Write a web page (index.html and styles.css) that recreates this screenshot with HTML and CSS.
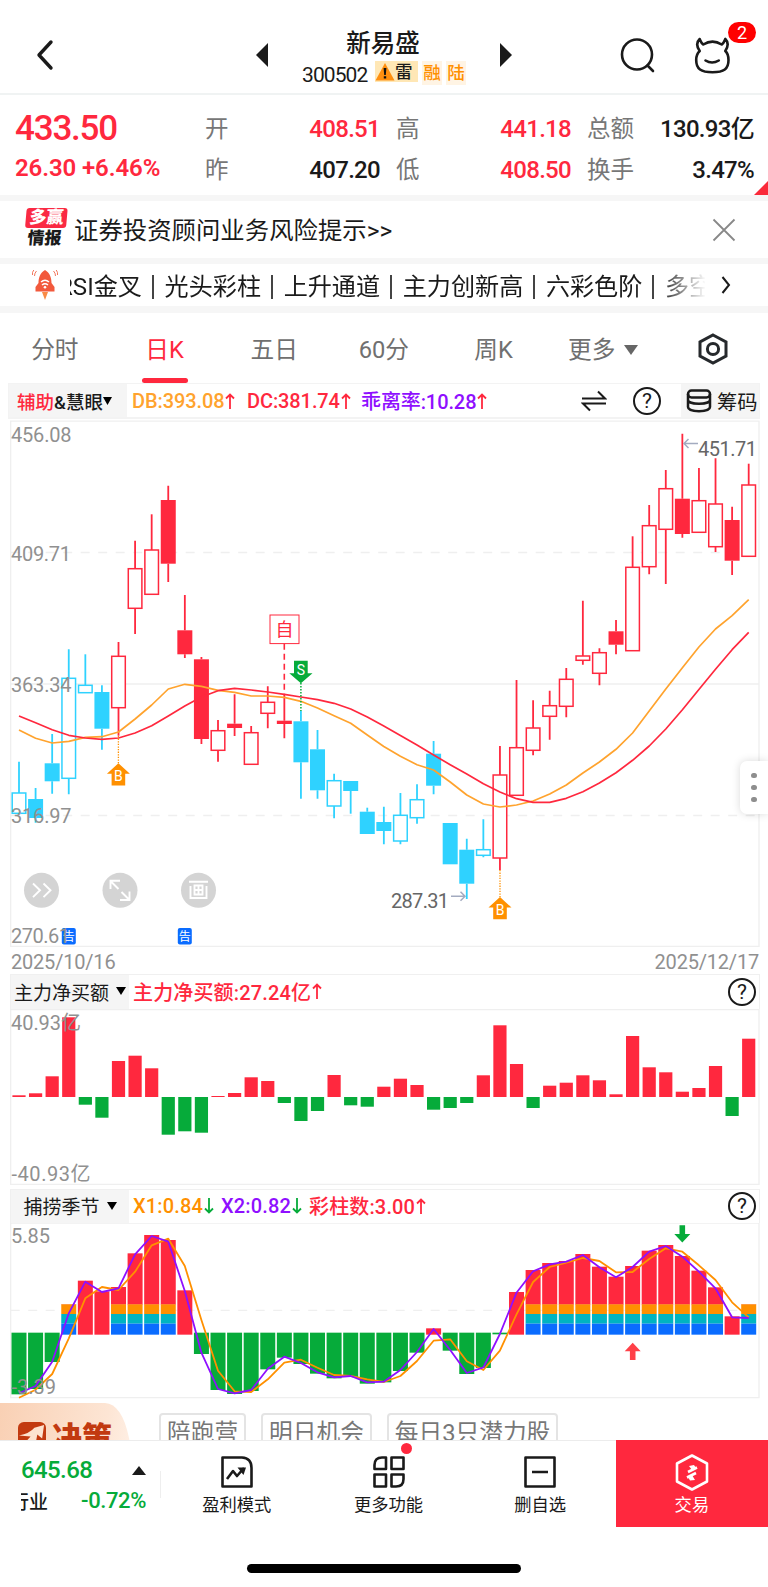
FILE: index.html
```html
<!DOCTYPE html>
<html lang="zh-CN">
<head>
  <meta charset="utf-8">
  <title>新易盛 300502</title>
  <link rel="stylesheet" href="styles.css">
</head>
<body>
  <header class="topbar">
    <svg class="back" width="20" height="32" viewBox="0 0 20 32"><path d="M16 3 L4 16 L16 29"/></svg>
    <svg class="prev" width="12" height="24" viewBox="0 0 12 24"><path d="M12 0 V24 L0 12Z"/></svg>
    <div class="stock">
      <div class="stock-name">新易盛</div>
      <div class="stock-code">
        <span class="code">300502</span>
        <span class="tag tag-warn"><svg width="20" height="19" viewBox="0 0 20 19"><path d="M10 1 L19.5 18.5 H0.5Z" fill="#ff8f0f"/><path d="M8.6 6 h2.8 l-.6 7 h-1.6z M8.8 14.2h2.4v2.3h-2.4z" fill="#111"/></svg>雷</span>
        <span class="tag">融</span>
        <span class="tag">陆</span>
      </div>
    </div>
    <svg class="next" width="12" height="24" viewBox="0 0 12 24"><path d="M0 0 V24 L12 12Z"/></svg>
    <svg class="search" width="36" height="36" viewBox="0 0 36 36"><circle cx="17" cy="16.5" r="15"/><path d="M27.5 27.5 L33 33"/></svg>
    <div class="robot">
      <svg width="38" height="38" viewBox="0 0 38 38"><path d="M6.7 3 C3.6 6 3.2 10 6.7 15 C4.5 17 3.2 20 3.2 24 C3.2 33 8 36.3 19.5 36.3 C31 36.3 35.5 33 35.5 24 C35.5 20 34.500 17 32.3 15 C35.600 10 35.300 6 32.3 3 C31 6 30.8 7.500 28.7 8.500 C23 5 16 5 10.3 8.500 C8.200 7.500 8 6 6.7 3Z"/><path d="M12.5 24.5 Q19 28.500 25.8 24.5"/></svg>
      <span class="badge">2</span>
    </div>
  </header>

  <section class="quote">
    <div class="price">433.50</div>
    <div class="label">开</div><div class="val up">408.51</div>
    <div class="label">高</div><div class="val up">441.18</div>
    <div class="label">总额</div><div class="val">130.93亿</div>
    <div class="change">26.30 +6.46%</div>
    <div class="label">昨</div><div class="val">407.20</div>
    <div class="label">低</div><div class="val up">408.50</div>
    <div class="label">换手</div><div class="val">3.47%</div>
    <i class="corner"></i>
  </section>

  <section class="notice">
    <div class="intel"><span class="intel-top">多赢</span><span class="intel-bottom">情报</span></div>
    <span class="notice-text">证券投资顾问业务风险提示&gt;&gt;</span>
    <svg class="close" width="24" height="24" viewBox="0 0 24 24"><path d="M1.5 1.5 L22.5 22.5 M22.5 1.5 L1.5 22.5"/></svg>
  </section>

  <section class="signals">
    <svg class="rocket" width="26" height="32" viewBox="0 0 26 32">
      <path d="M13 1 C18 4 19.5 9 19.5 14 L22.5 18 V22.500 H3.5 V18 L6.5 14 C6.5 9 8 4 13 1Z" fill="#f2593c"/>
      <path d="M10 23 H16 L13 31Z" fill="#f98a45"/>
      <path d="M9 13 Q13 9.5 17 13 M10 16 Q13 13.5 16 16" fill="none" stroke="#fff" stroke-width="1.5"/><circle cx="13" cy="18.2" r="1.3" fill="#fff"/>
      <path d="M4.5 2 Q2.5 4 2.5 7 M1.8 1 Q0 3 0.5 6 M21.5 2 Q23.5 4 23.5 7 M24.2 1 Q26 3 25.5 6" fill="none" stroke="#f2765c"/>
    </svg>
    <div class="signal-list">
      <span class="first">RSI金叉</span><i></i><span>光头彩柱</span><i></i><span>上升通道</span><i></i><span>主力创新高</span><i></i><span>六彩色阶</span><i></i><span>多空</span>
    </div>
    <svg class="more" width="10" height="18" viewBox="0 0 10 18"><path d="M1.5 1 L8 9 L1.5 17"/></svg>
  </section>

  <nav class="tabs">
    <div class="tab">分时</div>
    <div class="tab active">日K</div>
    <div class="tab">五日</div>
    <div class="tab">60分</div>
    <div class="tab">周K</div>
    <div class="tab tab-more">更多<svg width="14" height="10" viewBox="0 0 14 10"><path d="M0 0 H14 L7 10Z" fill="#666"/></svg></div>
    <div class="tab"><svg width="30" height="32" viewBox="0 0 30 32" fill="none" stroke="#26292c" stroke-width="3"><path d="M15 2 L28 9 V23 L15 30 L2 23 V9Z"/><circle cx="15" cy="16" r="5.6"/></svg></div>
  </nav>

  <div class="toolbar">
    <div class="main-ind"><b class="up">辅助</b><b>&amp;慧眼</b><svg width="9" height="8" viewBox="0 0 9 8"><path d="M0 0H9L4.5 8Z"/></svg></div>
    <span class="ind orange w-db">DB:393.08<svg class="arr" viewBox="0 0 10 16"><path d="M5 16V1.5M1 5.5L5 1.5L9 5.5"/></svg></span>
    <span class="ind up w-dc">DC:381.74<svg class="arr" viewBox="0 0 10 16"><path d="M5 16V1.5M1 5.5L5 1.5L9 5.5"/></svg></span>
    <span class="ind purple">乖离率:10.28<svg class="arr red-arr" viewBox="0 0 10 16"><path d="M5 16V1.5M1 5.5L5 1.5L9 5.5"/></svg></span>
    <svg class="swap" width="26" height="22" viewBox="0 0 26 22"><path d="M1 8.5H24L17 1.5M25 13.5H2L9 20.5"/></svg>
    <span class="help">?</span>
    <div class="chips"><svg width="26" height="24" viewBox="0 0 26 24" fill="none" stroke="#1a1a1a" stroke-width="2.5"><rect x="2" y="1.5" width="22" height="7" rx="3.500"/><path d="M2 5V18C2 23.500 24 23.500 24 18V5M2 11C2 16 24 16 24 11"/></svg>筹码</div>
  </div>

  <div class="kline">
    <svg id="kline" width="750" height="527" viewBox="10 420 750 527"></svg>
    <div class="handle"><i></i><i></i><i></i></div>
  </div>
  <div class="dates"><span>2025/10/16</span><span>2025/12/17</span></div>

  <div class="panel-head">
    <div class="panel-name">主力净买额<svg width="10" height="8" viewBox="0 0 10 8"><path d="M0 0H10L5 8Z"/></svg></div>
    <span class="ind up">主力净买额:27.24亿<svg class="arr" viewBox="0 0 10 16"><path d="M5 16V1.5M1 5.5L5 1.5L9 5.5"/></svg></span>
    <span class="help">?</span>
  </div>
  <svg id="flow" class="panel" width="750" height="176" viewBox="10 1009 750 176"></svg>

  <div class="panel-head head-season">
    <div class="panel-name">捕捞季节<svg width="10" height="8" viewBox="0 0 10 8"><path d="M0 0H10L5 8Z"/></svg></div>
    <span class="ind deep w-x1">X1:0.84<svg class="arr green-arr" viewBox="0 0 10 16"><path d="M5 0V14.5M1 10.5L5 14.5L9 10.5"/></svg></span>
    <span class="ind purple w-x2">X2:0.82<svg class="arr green-arr" viewBox="0 0 10 16"><path d="M5 0V14.5M1 10.5L5 14.5L9 10.5"/></svg></span>
    <span class="ind up">彩柱数:3.00<svg class="arr" viewBox="0 0 10 16"><path d="M5 16V1.5M1 5.5L5 1.5L9 5.5"/></svg></span>
    <span class="help">?</span>
  </div>
  <svg id="season" class="panel" width="750" height="176" viewBox="10 1223 750 176"></svg>

  <div class="promo">
    <div class="decision">
      <svg width="28" height="28" viewBox="0 0 29 29"><rect width="29" height="29" rx="6" fill="#c23a10"/><path d="M1 14 Q12 12 17 6 L27 3 L25 17 L20 13 L17 29 L11 22 L4 25 L13 15Z" fill="#fde3d0"/></svg>
      <span>决策</span>
    </div>
    <div class="chip">陪跑营</div>
    <div class="chip">明日机会</div>
    <div class="chip">每日3只潜力股</div>
  </div>

  <footer class="bottom">
    <div class="index">
      <div class="index-row"><span class="index-val">645.68</span><svg width="14" height="9" viewBox="0 0 14 9"><path d="M0 9H14L7 0Z" fill="#1a1a1a"/></svg></div>
      <div class="index-row"><span class="index-name"><span>行业</span></span><span class="index-pct">-0.72%</span></div>
    </div>
    <div class="nav-item">
      <svg width="32" height="32" viewBox="0 0 32 32"><path d="M1.5 1.5H21Q30.5 2 30.5 12V30.5H1.5Z"/><path d="M6 23L12 15L16 20L23 12" /><path d="M16.5 11.5H25L22.5 19Z" fill="#1a1a1a" stroke="none"/></svg>
      <span>盈利模式</span>
    </div>
    <div class="nav-item">
      <svg width="32" height="32" viewBox="0 0 32 32"><path d="M13 1.5V13H1.5V9Q1.5 1.5 9 1.5Z M18.5 1.5H30.5V13H18.5Z M1.5 18.5H13V30.5H1.5Z M18.5 18.5H30.5V23Q30.5 30.5 23 30.5H18.5Z"/></svg>
      <span>更多功能</span><i class="dot"></i>
    </div>
    <div class="nav-item">
      <svg width="32" height="32" viewBox="0 0 32 32"><path d="M1.5 1.5H30.5V30.5H1.5Z M8 16H24"/></svg>
      <span>删自选</span>
    </div>
    <div class="nav-item trade">
      <svg width="34" height="37" viewBox="0 0 34 37"><path d="M17 1.5L32 9.5V27.5L17 35.5L2 27.5V9.5Z"/><path d="M13 18L22 13.5M12 23.5L21 19"/><path d="M14 12L19 11L21 14L17 16ZM20 26L15 26.500L13 23L17 21Z" fill="#fff" stroke="none"/></svg>
      <span>交易</span>
    </div>
  </footer>
  <div class="home-bar"></div>

  <script src="charts.js"></script>
</body>
</html>
```

FILE: styles.css
```css
* {
  box-sizing: border-box;
}
body {
  margin: 0;
  width: 768px;
  height: 1587px;
  overflow: hidden;
  background: #fff;
  color: #1a1a1a;
  font-family: Roboto, "Noto Sans CJK SC", sans-serif;
}
svg {
  display: block;
  flex: none;
}
.up {
  color: #ff283e;
}
.orange {
  color: #ffa32e;
}
.deep {
  color: #ff9000;
}
.purple {
  color: #8f0fff;
}

/* header */
.topbar {
  display: flex;
  height: 95px;
  border-bottom: 2px solid #f0f3f3;
}
.back {
  margin: 39px 0 0 35px;
  fill: none;
  stroke: #1a1a1a;
  stroke-width: 3.4;
  stroke-linecap: round;
  stroke-linejoin: round;
}
.prev {
  margin: 43px 0 0 201px;
  fill: #1a1a1a;
}
.next {
  margin-top: 43px;
  fill: #1a1a1a;
}
.stock {
  width: 232px;
  padding-top: 27px;
}
.stock-name {
  padding-right: 2px;
  text-align: center;
  font-size: 24.5px;
  line-height: 33px;
  font-weight: 500;
}
.stock-code {
  display: flex;
  align-items: center;
  height: 26px;
  padding-left: 34px;
}
.code {
  width: 69px;
  font-size: 21px;
  letter-spacing: -0.9px;
  padding-top: 3px;
}
.tag {
  width: 20px;
  height: 24px;
  margin-left: 4px;
  background: #fff4e4;
  color: #ff9000;
  font-size: 17.5px;
  font-weight: 500;
  line-height: 24px;
  text-align: center;
}
.tag-warn {
  display: flex;
  align-items: center;
  width: 43px;
  height: 21px;
  margin: 0 0 3px 4px;
  background: #ffe7b5;
  color: #1a1a1a;
  line-height: 20px;
  white-space: nowrap;
}
.search {
  margin: 38px 0 0 108px;
  fill: none;
  stroke: #1a1a1a;
  stroke-width: 2.6;
  stroke-linecap: round;
}
.robot {
  position: relative;
  margin: 36px 0 0 37px;
  width: 38px;
  height: 38px;
  fill: none;
  stroke: #1a1a1a;
  stroke-width: 2.6;
  stroke-linecap: round;
  stroke-linejoin: round;
}
.badge {
  position: absolute;
  left: 35px;
  top: -14px;
  width: 28px;
  height: 21px;
  border-radius: 11px;
  background: #f00;
  color: #fff;
  font-size: 18px;
  line-height: 22px;
  text-align: center;
}

/* quote */
.quote {
  position: relative;
  display: grid;
  grid-template-columns: 190px 60px 115px 76px 115px 58px 125px;
  grid-template-rows: 41px 41px;
  align-items: center;
  height: 100px;
  padding: 13px 0 0 15px;
}
.price {
  font-size: 35px;
  letter-spacing: -1.2px;
  font-weight: 500;
  color: #ff283e;
}
.change {
  font-size: 24px;
  font-weight: 600;
  letter-spacing: -0.1px;
  color: #ff283e;
  white-space: nowrap;
  padding-bottom: 4px;
}
.label {
  padding-left: 16px;
  font-size: 23.5px;
  line-height: 34px;
  color: #777;
  white-space: nowrap;
}
.price + .label, .change + .label {
  padding-left: 0;
}
.val {
  font-size: 24px;
  font-weight: 500;
  line-height: 34px;
  letter-spacing: -0.7px;
  text-align: right;
  white-space: nowrap;
}
.quote .val {
  justify-self: end;
}
.corner {
  position: absolute;
  right: 0;
  bottom: 0;
  border-left: 14px solid transparent;
  border-bottom: 14px solid #fa2a3a;
}

/* notice and signals */
.notice {
  display: flex;
  align-items: center;
  height: 63px;
  border-top: 6px solid #f6f6f6;
  padding-left: 25px;
}
.intel {
  width: 41px;
  height: 40px;
  margin: -3px 8px 0 0;
  transform: skewX(-5deg);
  text-align: center;
  font-weight: 900;
  font-size: 17px;
}
.intel span {
  display: block;
}
.intel-top {
  height: 20px;
  line-height: 19px;
  border-radius: 3px;
  background: #fa2a43;
  color: #fff;
}
.intel-bottom {
  height: 20px;
  line-height: 20px;
}
.notice-text {
  margin-top: -2px;
  font-size: 24.4px;
  white-space: nowrap;
}
.close {
  margin: 0 32px 0 auto;
  stroke: #888;
  stroke-width: 1.8;
}
.signals {
  display: flex;
  align-items: center;
  height: 55px;
  border-top: 6px solid #f6f6f6;
  border-bottom: 7px solid #f6f6f6;
}
.rocket {
  margin-left: 32px;
}
.signal-list {
  display: flex;
  align-items: center;
  width: 635px;
  margin: 3px 0 0 12px;
  overflow: hidden;
  white-space: nowrap;
  font-size: 24.1px;
  line-height: 38px;
  -webkit-mask-image: linear-gradient(90deg, #000 588px, transparent 636px);
  mask-image: linear-gradient(90deg, #000 588px, transparent 636px);
}
.signal-list .first {
  margin-left: -12px;
}
.signal-list i {
  flex: none;
  width: 2px;
  height: 24px;
  margin: 0 10.7px 0 10px;
  background: #444;
}
.more {
  margin-left: 16px;
  fill: none;
  stroke: #1a1a1a;
  stroke-width: 2;
}

/* period tabs */
.tabs {
  display: flex;
  height: 70px;
}
.tab {
  position: relative;
  display: flex;
  align-items: center;
  justify-content: center;
  width: 109.7px;
  font-size: 23.7px;
  color: #707070;
}
.tab svg {
  margin-top: 1px;
}
.tab.active {
  color: #ff283e;
}
.tab.active::after {
  content: "";
  position: absolute;
  left: 32px;
  bottom: 0;
  width: 46px;
  height: 5px;
  border-radius: 3px;
  background: #ff283e;
}
.tab-more svg {
  margin: 4px 0 0 9px;
}

/* indicator toolbar */
.toolbar {
  display: flex;
  align-items: center;
  height: 36px;
  margin: 0 8px;
  border: 1px solid #f3f3f3;
  border-bottom-width: 2px;
}
.main-ind {
  display: flex;
  align-items: center;
  align-self: stretch;
  width: 118px;
  padding-left: 8px;
  margin-right: 5px;
  background: #f5f5f5;
  font-size: 18.5px;
  white-space: nowrap;
}
.main-ind b {
  font-weight: 500;
}
.ind {
  display: flex;
  align-items: center;
  font-size: 20px;
  font-weight: 500;
  white-space: nowrap;
}
.toolbar .ind {
  letter-spacing: -0.1px;
}
.w-db {
  width: 115px;
}
.w-dc {
  width: 114px;
}
.arr {
  width: 10px;
  height: 16px;
  margin-left: 1px;
  fill: none;
  stroke: currentColor;
  stroke-width: 1.8;
}
.w-db .arr, .red-arr {
  color: #ff283e;
}
.green-arr {
  color: #06ab3a;
}
.swap {
  margin-left: auto;
  fill: none;
  stroke: #1a1a1a;
  stroke-width: 2;
}
.help {
  flex: none;
  width: 28px;
  height: 28px;
  border: 2px solid #1a1a1a;
  border-radius: 50%;
  font-size: 21px;
  line-height: 25px;
  text-align: center;
}
.toolbar .help {
  margin: 0 20px 0 26px;
}
.chips {
  display: flex;
  align-items: center;
  align-self: stretch;
  width: 78px;
  padding-left: 5px;
  gap: 5px;
  background: #f5f5f5;
  font-size: 20.3px;
  white-space: nowrap;
}

/* charts */
.kline {
  position: relative;
  height: 527px;
  margin-top: 1px;
}
.kline svg, .panel {
  margin-left: 10px;
}
.handle {
  position: absolute;
  right: 0;
  top: 341px;
  display: flex;
  flex-direction: column;
  align-items: center;
  justify-content: center;
  gap: 6.5px;
  width: 28px;
  height: 53px;
  border-radius: 7px 0 0 7px;
  background: #fff;
  box-shadow: 0 0 8px rgba(0, 0, 0, 0.15);
}
.handle i {
  width: 5.4px;
  height: 5.4px;
  border-radius: 50%;
  background: #8e8e8e;
}
.dates {
  display: flex;
  justify-content: space-between;
  height: 27px;
  padding: 4px 9px 0 11px;
  font-size: 20px;
  letter-spacing: -0.2px;
  line-height: 23px;
  color: #909090;
}
.panel-head {
  display: flex;
  align-items: center;
  height: 35px;
  margin: 0 8px 0 10px;
  border: 1px solid #f0f0f0;
  border-bottom: 0;
}
.head-season {
  height: 34px;
  margin-top: 4px;
}
.panel-name {
  display: flex;
  align-items: center;
  justify-content: center;
  gap: 7px;
  align-self: stretch;
  width: 118px;
  padding-bottom: 2px;
  margin-right: 4px;
  background: #f5f5f5;
  font-size: 19px;
  white-space: nowrap;
}
.panel-head .ind {
  padding-bottom: 2px;
  letter-spacing: 0.15px;
}
.w-x1 {
  width: 88px;
}
.w-x2 {
  width: 88px;
}
.panel-head .help {
  margin: 0 3px 1px auto;
}
.grid {
  stroke: #efefef;
  stroke-width: 1.3;
  fill: none;
}
.axis {
  fill: #909090;
  font-size: 20px;
}
.peak {
  fill: #666;
  font-size: 20px;
}

/* promo strip */
.promo {
  display: flex;
  height: 41px;
  overflow: hidden;
}
.decision {
  display: flex;
  width: 144px;
  height: 70px;
  margin: 4px 15px 0 0;
  padding: 19px 0 0 18px;
  gap: 6px;
  background: linear-gradient(100deg, #f9d0b4, #fde5d4 70%, #fff5ee);
  clip-path: path("M0 0H105Q122 1 129 35L135 70H0Z");
  color: #c23a10;
  font-size: 30px;
  font-weight: 900;
  line-height: 32px;
}
.chip {
  height: 48px;
  margin: 14px 15px 0 0;
  padding: 0 6px;
  border: 2px solid #e4e4e4;
  border-radius: 4px;
  color: #777;
  font-size: 23.7px;
  line-height: 37px;
  white-space: nowrap;
}

/* bottom bar */
.bottom {
  display: flex;
  height: 87px;
  border-top: 1px solid #ececec;
}
.index {
  width: 161px;
  padding-top: 14px;
  background: linear-gradient(#eee, #eee) 160px 30px / 1px 27px no-repeat;
}
.index-row {
  display: flex;
  align-items: center;
  justify-content: space-between;
  height: 30px;
  padding: 0 15px 0 21px;
}
.index-val {
  color: #06ab3a;
  font-size: 24px;
  font-weight: 500;
  letter-spacing: -0.6px;
}
.index-name {
  width: 30px;
  overflow: hidden;
  font-size: 19px;
  font-weight: 500;
}
.index-name span {
  margin-left: -11px;
}
.index-pct {
  color: #06ab3a;
  font-size: 22px;
  font-weight: 500;
  letter-spacing: -0.4px;
}
.nav-item {
  position: relative;
  display: flex;
  flex-direction: column;
  align-items: center;
  width: 151.7px;
  padding-top: 15px;
  font-size: 17.3px;
  line-height: 24px;
}
.nav-item svg {
  fill: none;
  stroke: #1a1a1a;
  stroke-width: 2.6;
  stroke-linejoin: round;
}
.nav-item span {
  margin-top: 5px;
}
.nav-item.trade {
  margin-top: -1px;
  padding-top: 14px;
  background: #ff283e;
  color: #fff;
}
.trade svg {
  stroke: #fff;
}
.nav-item.trade span {
  margin-top: 2px;
}
.dot {
  position: absolute;
  left: 88px;
  top: 2px;
  width: 11px;
  height: 11px;
  border-radius: 50%;
  background: #ff283e;
}
.home-bar {
  width: 274px;
  height: 9px;
  margin: 37px auto 0;
  border-radius: 5px;
  background: #000;
}
```

FILE: charts.js
```js
const RED = '#ff283e';
const CYAN = '#2fd2ff';
const GREEN = '#06ab3a';
const ORANGE = '#ffa32e';
const cx = i => 19 + i * 16.584;

function line(points, color, width) {
  const pts = points.map((y, i) => cx(i).toFixed(1) + ',' + y.toFixed(1)).join(' ');
  return `<polyline points="${pts}" fill="none" stroke="${color}" stroke-width="${width}" stroke-linejoin="round"/>`;
}

// colour (upper case = solid body), high, body top, body bottom, low
const candles = [
  ['c', 761.7, 793, 813.3, 813.3], ['C', 788, 799, 818, 822.7], ['C', 734, 763.3, 781.3, 793.7],
  ['c', 649.3, 678.3, 778.3, 794.3], ['c', 654.3, 685.3, 692.7, 692.7], ['C', 685.3, 692, 728.7, 749.7],
  ['r', 642, 656.3, 707.7, 735.7], ['r', 540.7, 568.7, 608.3, 634], ['r', 514.3, 550, 594.3, 594.3],
  ['R', 485.7, 500, 563.7, 582], ['R', 595, 630.3, 654.3, 658], ['R', 657, 659.3, 739, 744],
  ['r', 720, 730.7, 750.3, 761.7], ['R', 694.3, 723.7, 728, 736], ['r', 726, 732.7, 764.3, 764.3],
  ['r', 686.3, 702.3, 713.3, 728.3], ['R', 695.7, 720.7, 724, 738.3], ['C', 711, 721.3, 762.3, 798.7],
  ['C', 730, 749.3, 790.3, 798.7], ['c', 773.7, 780.7, 806, 818.3], ['C', 781, 781, 791, 813.7],
  ['C', 807.7, 811.7, 834, 834], ['C', 806.7, 822, 831, 844.3], ['c', 793, 815.3, 841, 844.3],
  ['c', 784.3, 799.7, 817.7, 823.7], ['C', 741, 753.7, 785.7, 794.3], ['C', 823, 823, 864.3, 864.3],
  ['C', 838.7, 849.7, 883.7, 899], ['c', 819.3, 849.7, 855.3, 857.3], ['r', 746, 775, 858, 870],
  ['r', 680, 747.7, 795.3, 795.3], ['r', 700.3, 728, 750.3, 755.3], ['r', 690.7, 705.7, 716.3, 739.7],
  ['r', 668, 679.3, 706.3, 717.3], ['r', 600.7, 656, 660.3, 664.7], ['r', 648.3, 652.7, 673.3, 685.3],
  ['R', 620, 631.3, 644.7, 654.3], ['r', 536.3, 567.3, 650.7, 650.7], ['r', 505, 525.7, 566.7, 574.3],
  ['r', 470, 488.7, 529.3, 584], ['R', 433.7, 498.7, 534, 537.7], ['r', 468, 500.7, 532.3, 532.3],
  ['r', 458.3, 504, 546.7, 552], ['R', 506.7, 520, 560.7, 575], ['r', 463.7, 485, 556.3, 556.3]
];
const db = [730, 738.3, 743, 741.3, 737.3, 736.7, 732, 719, 705, 689, 684.3, 686.3, 690.3, 692.3, 696, 696, 697.3, 701.3,
  708, 715.7, 723.3, 735, 746.5, 756.3, 764.7, 770, 782, 795, 804, 807, 805, 801, 794, 785, 773, 762, 749.3, 733, 711,
  689, 667.7, 647, 629, 615.7, 599.7];
const dc = [716, 722.7, 729.7, 735.3, 738, 739.3, 738, 733, 725.7, 716, 706, 697, 690.7, 688.3, 690, 692, 694.3, 697,
  699.7, 703.3, 709, 717, 726, 735.5, 745, 755, 764.7, 774, 783.7, 792, 798.7, 802.3, 802.3, 798.3, 791.7, 783, 772.7,
  760.3, 746, 729, 709.7, 689.5, 669.3, 649.7, 632.3];

function drawCandle([type, high, top, bottom, low], i) {
  const color = type.toLowerCase() === 'c' ? CYAN : RED;
  const x = cx(i);
  const solid = type === type.toUpperCase();
  let s = `<path d="M${x} ${high}V${top}M${x} ${bottom}V${low}" stroke="${color}" stroke-width="1.8"/>`;
  if (solid) {
    s += `<rect x="${x - 7.5}" y="${top}" width="15" height="${bottom - top}" fill="${color}"/>`;
  } else {
    s += `<rect x="${x - 6.8}" y="${top}" width="13.6" height="${bottom - top}" fill="#fff" stroke="${color}" stroke-width="1.5"/>`;
  }
  return s;
}

function buyMark(x, from, y) {
  return `<path d="M${x} ${from}V${y}" stroke="#ff9000" stroke-width="1.3" stroke-dasharray="1.3 1.3"/>
    <path d="M${x} ${y}l11.5 10.5h-4.7v11.7h-13.6v-11.7h-4.7z" fill="#ff9000"/>
    <text x="${x}" y="${y + 17.7}" font-size="14" fill="#fff" text-anchor="middle">B</text>`;
}

function newsMark(x) {
  return `<rect x="${x - 7}" y="928" width="14" height="16.5" rx="2" fill="#0a6cff"/>
    <text x="${x}" y="941" font-size="12" fill="#fff" text-anchor="middle">告</text>`;
}

document.getElementById('kline').innerHTML = `
  <path class="grid" d="M10.7 421.2H759V946.3H10.7ZM10.7 684H759"/>
  <path class="grid" d="M10.7 552.5H759M10.7 815.5H759" stroke-dasharray="9 8.5"/>
  ${candles.map(drawCandle).join('')}
  ${line(db, ORANGE, 1.7)}${line(dc, RED, 1.7)}
  ${buyMark(118.4, 736, 763.3)}${buyMark(500, 870, 897)}
  <rect x="270" y="615" width="29" height="28.6" fill="#fff" stroke="${RED}" stroke-width="1"/>
  <text x="284.5" y="636" font-size="18" fill="${RED}" text-anchor="middle">自</text>
  <path d="M284.3 643.7V696" stroke="${RED}" stroke-width="1.6" stroke-dasharray="6 4"/>
  <path d="M300.9 683V711" stroke="${GREEN}" stroke-width="1.5" stroke-dasharray="1.5 1.5"/>
  <path d="M294 660.7h13.7v12.5h4.8l-11.6 10l-11.6 -10h4.7z" fill="${GREEN}"/>
  <text x="300.9" y="674.7" font-size="14" fill="#fff" text-anchor="middle">S</text>
  <path d="M698 443.5H684M688.5 439L684 443.5L688.5 448" fill="none" stroke="#a3abc0" stroke-width="1.5"/>
  <text class="peak" x="698" y="456" textLength="59">451.71</text>
  <path d="M451 896.3H465M460.5 891.8L465 896.3L460.5 900.8" fill="none" stroke="#a3abc0" stroke-width="1.5"/>
  <text class="peak" x="391" y="908" textLength="58">287.31</text>
  <circle cx="41.5" cy="890.3" r="17.5" fill="#d4d4d4"/>
  <circle cx="120" cy="890.3" r="17.5" fill="#d4d4d4"/>
  <circle cx="198.5" cy="890.3" r="17.5" fill="#d4d4d4"/>
  <g fill="none" stroke="#fff" stroke-width="1.9">
    <path d="M33 883.5l7 6.8l-7 6.8M43.5 883.5l7 6.8l-7 6.8"/>
    <path d="M118.5 889L110.5 881M110.5 889V880.7H120M121.5 892L129.5 900M129.5 891.5V900H120"/>
    <path d="M189 881.7H208M190.5 886V898H206.5V886M194.5 885.5H202.5V894.5H194.5ZM198.5 885.5V894.5M194.5 890H202.5"/>
  </g>
  ${newsMark(68.8)}${newsMark(184.8)}
  <text class="axis" x="11" y="441.5" textLength="60.500">456.08</text>
  <text class="axis" x="11" y="561" textLength="60">409.71</text>
  <text class="axis" x="11" y="692.2" textLength="60.500">363.34</text>
  <text class="axis" x="11" y="823.2" textLength="60.500">316.97</text>
  <text class="axis" x="11" y="942.5" textLength="59">270.61</text>`;

// net inflow bars, height from the zero line
const flow = [1.7, 3.7, 20.7, 79.7, -7.7, -20.7, 36, 41.3, 28.7, -37.7, -34.3, -35.7, 1, 4, 19.7, 16, -6, -24, -14, 22,
  -8.3, -9.7, 10.3, 18.3, 12, -12.7, -11, -6, 21.7, 71.7, 33, -11, 11.3, 14.3, 21.7, 16.7, 2.7, 61, 29.7, 24.7, 5.3, 9,
  31, -19, 58.3];
document.getElementById('flow').innerHTML = `
  <path class="grid" d="M10.7 1009.5H759V1184.3H10.7Z"/>
  ${flow.map((v, i) => `<rect x="${cx(i) - 6.6}" y="${v > 0 ? 1097 - v : 1097}" width="13.2" height="${Math.abs(v)}" fill="${v > 0 ? RED : GREEN}"/>`).join('')}
  <text class="axis" x="11" y="1030" textLength="70">40.93亿</text>
  <text class="axis" x="11.5" y="1181" textLength="79">-40.93亿</text>`;

// season bars: g = below zero, r = plain red, s = red with the three colour stripes
const season = [['g', 628], ['g', 612], ['g', 531], ['s', 358], ['r', 287], ['r', 319], ['s', 306], ['s', 205], ['s', 150],
  ['s', 165], ['r', 316], ['g', 507], ['g', 615], ['g', 627], ['g', 618], ['g', 553], ['g', 518], ['g', 537], ['g', 566],
  ['g', 580], ['g', 576], ['g', 596], ['g', 592], ['g', 558], ['g', 503], ['r', 430], ['g', 497], ['g', 567], ['g', 549],
  ['g', 448], ['r', 321], ['s', 255], ['s', 234], ['s', 228], ['s', 207], ['s', 245], ['s', 275], ['s', 243], ['s', 197],
  ['s', 180], ['s', 213], ['s', 257], ['s', 307], ['r', 394], ['s', 358]];
const x1 = [638, 614, 567, 460, 340, 306, 315, 260, 181, 161, 243, 405, 557, 619, 621, 583, 533, 524, 548, 570, 573, 583,
  591, 573, 528, 467, 463, 529, 555, 497, 388, 291, 246, 233, 219, 228, 262, 261, 222, 190, 200, 241, 285, 352, 397];
const x2 = [625, 603, 530, 385, 290, 321, 310, 208, 153, 170, 318, 503, 612, 625, 615, 551, 515, 534, 562, 577, 573, 592,
  590, 555, 501, 432, 495, 564, 547, 447, 323, 259, 238, 230, 210, 247, 277, 246, 200, 183, 215, 260, 310, 397, 399];
const sy = v => 1185 + v / 3;

function bar(i, from, to, color) {
  return `<rect x="${cx(i) - 7.5}" y="${sy(from)}" width="15" height="${(to - from) / 3}" fill="${color}"/>`;
}

function seasonBar([kind, v], i) {
  if (kind === 'g') return bar(i, 443, v, GREEN);
  if (kind === 'r') return bar(i, v, 449, RED);
  return bar(i, v, 359, RED) + bar(i, 358, 387, '#ff9000') + bar(i, 387, 416, '#00b4c1') + bar(i, 416, 449, '#0a6cff');
}

document.getElementById('season').innerHTML = `
  <path class="grid" d="M10.7 1223H759V1397.7H10.7Z"/>
  <path class="grid" d="M10.7 1310.3H759" stroke-dasharray="9 8.5"/>
  ${season.map(seasonBar).join('')}
  ${line(x1.map(sy), '#ff9000', 1.8)}${line(x2.map(sy), '#8f0fff', 1.8)}
  <path d="M679.5 1225.3h5.6v8.7h5.2l-8 8.5l-8 -8.5h5.2z" fill="${GREEN}"/>
  <path d="M632.7 1342.7l8 8.5h-5.2v8.7h-5.6v-8.7h-5.2z" fill="#ff4048"/>
  <text class="axis" x="11" y="1243.3">5.85</text>
  <text class="axis" x="11.5" y="1394">-3.39</text>`;
```
